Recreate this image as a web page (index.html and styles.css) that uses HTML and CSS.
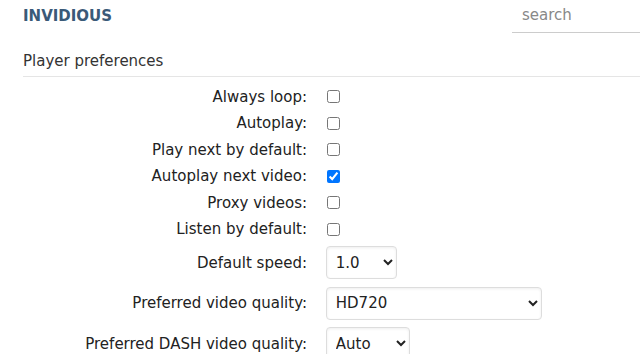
FILE: index.html
```html
<!DOCTYPE html>
<html lang="en">

<head>
  <meta charset="UTF-8">
  <meta name="viewport" content="width=device-width, initial-scale=1.0">
  <title>Preferences - Invidious</title>
  <link rel="stylesheet" href="styles.css">
</head>

<body>
  <header class="navbar">
    <a href="#" class="index-link">INVIDIOUS</a>
    <form class="searchbar">
      <input type="search" name="q" placeholder="search">
    </form>
  </header>

  <main>
    <form class="prefs">
      <fieldset>
        <legend>Player preferences</legend>

        <div class="control-group">
          <label for="video_loop">Always loop:</label>
          <input name="video_loop" id="video_loop" type="checkbox">
        </div>
        <div class="control-group">
          <label for="autoplay">Autoplay:</label>
          <input name="autoplay" id="autoplay" type="checkbox">
        </div>
        <div class="control-group">
          <label for="continue">Play next by default:</label>
          <input name="continue" id="continue" type="checkbox">
        </div>
        <div class="control-group">
          <label for="continue_autoplay">Autoplay next video:</label>
          <input name="continue_autoplay" id="continue_autoplay" type="checkbox" checked>
        </div>
        <div class="control-group">
          <label for="local">Proxy videos:</label>
          <input name="local" id="local" type="checkbox">
        </div>
        <div class="control-group">
          <label for="listen">Listen by default:</label>
          <input name="listen" id="listen" type="checkbox">
        </div>

        <div class="control-group">
          <label for="speed">Default speed:</label>
          <select name="speed" id="speed" class="select-speed">
            <option>2.0</option>
            <option>1.5</option>
            <option>1.25</option>
            <option selected>1.0</option>
            <option>0.75</option>
            <option>0.5</option>
          </select>
        </div>
        <div class="control-group">
          <label for="quality">Preferred video quality:</label>
          <select name="quality" id="quality" class="select-quality">
            <option>dash</option>
            <option selected>HD720</option>
            <option>medium</option>
            <option>small</option>
          </select>
        </div>
        <div class="control-group">
          <label for="quality_dash">Preferred DASH video quality:</label>
          <select name="quality_dash" id="quality_dash" class="select-dash">
            <option selected>Auto</option>
            <option>Best</option>
            <option>1080p</option>
            <option>720p</option>
          </select>
        </div>
      </fieldset>
    </form>
  </main>
</body>

</html>
```

FILE: styles.css
```css
* {
  box-sizing: border-box;
}

body {
  margin: 0;
  font-family: 'DejaVu Sans', sans-serif;
  font-size: 15px;
  color: #222;
  background: white;
}

.navbar {
  display: flex;
  justify-content: space-between;
  align-items: flex-start;
  padding-left: 23px;
  height: 40px;
}

.index-link {
  font-size: 15px;
  font-weight: bold;
  color: #3a5a78;
  text-decoration: none;
  margin-top: 7px;
}

.searchbar {
  width: 128px;
}

.searchbar input {
  width: 100%;
  font-family: inherit;
  font-size: 15px;
  border: none;
  border-bottom: 1px solid #ccc;
  border-radius: 0;
  padding: 6px 10px 8px;
  outline: none;
  color: #222;
}

.searchbar input::placeholder {
  color: #888;
}

main {
  padding: 0 0 0 23px;
}

fieldset {
  margin: 0;
  padding: 0;
  border: 0;
}

legend {
  display: block;
  width: 100%;
  padding: 12px 0 6px;
  margin-bottom: 10px;
  color: #333;
  border-bottom: 1px solid #e5e5e5;
}

.control-group {
  margin-bottom: 0.5em;
}

.control-group label {
  display: inline-block;
  vertical-align: middle;
  width: 284px;
  text-align: right;
  white-space: nowrap;
}

.control-group input[type="checkbox"] {
  margin: 3px 3px 3px 15px;
  vertical-align: middle;
  width: 13px;
  height: 13px;
}

select {
  margin-left: 14px;
  height: 33px;
  padding: 0 8px 0 5px;
  font-family: inherit;
  font-size: 15px;
  color: #222;
  background-color: white;
  border: 1px solid #ddd;
  border-radius: 4px;
  box-shadow: inset 0 1px 3px #eee;
  vertical-align: middle;
}

.select-speed {
  width: 71px;
}

.select-quality {
  width: 216px;
}

.select-dash {
  width: 84px;
}
```
